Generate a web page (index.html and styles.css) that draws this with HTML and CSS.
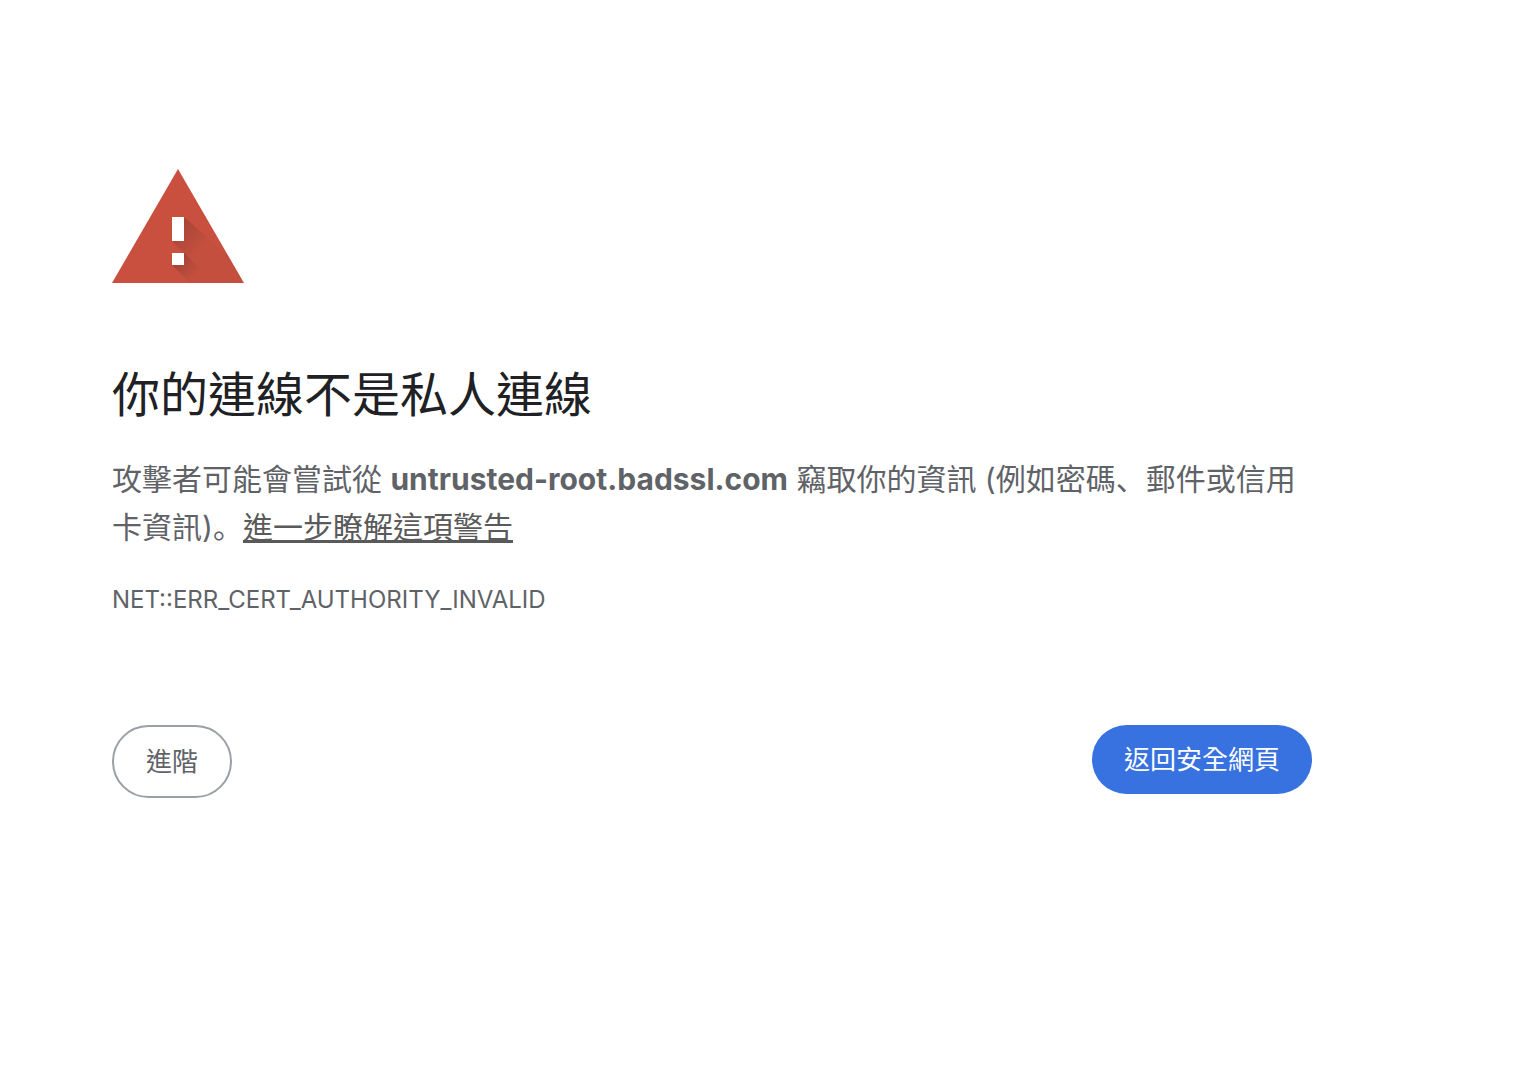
FILE: index.html
```
<!DOCTYPE html>
<html lang="zh-TW">
<head>
    <meta charset="UTF-8">
    <meta name="viewport" content="width=device-width, initial-scale=1.0">
    <title>隱私權錯誤</title>
    <link rel="stylesheet" href="styles.css">
</head>
<body>
    <main class="interstitial">
        <svg class="warning-icon" viewBox="0 0 132 114" aria-hidden="true">
            <defs>
                <linearGradient id="shadow" gradientUnits="userSpaceOnUse" x1="62" y1="62" x2="84" y2="84">
                    <stop offset="0" stop-color="#3e2723" stop-opacity="0.25"/>
                    <stop offset="1" stop-color="#3e2723" stop-opacity="0.03"/>
                </linearGradient>
                <linearGradient id="dot-shadow" gradientUnits="userSpaceOnUse" x1="66" y1="90" x2="83" y2="107">
                    <stop offset="0" stop-color="#3e2723" stop-opacity="0.25"/>
                    <stop offset="1" stop-color="#3e2723" stop-opacity="0"/>
                </linearGradient>
            </defs>
            <path fill="#c9503f" d="M66 0 132 114H0Z"/>
            <path fill="url(#shadow)" d="M72 48 116 86 132 114H78L60 96 72 84 60 72Z"/>
            <path fill="url(#dot-shadow)" d="M72 84 102 114H78L60 96Z"/>
            <path fill="#fff" d="M60 48h12v24H60zM60 84h12v12H60z"/>
        </svg>
        <h1>你的連線不是私人連線</h1>
        <p class="message">攻擊者可能會嘗試從 <strong>untrusted-root.badssl.com</strong> 竊取你的資訊 (例如密碼<span class="punctuation" lang="zh-CN">、</span>郵件或信用卡資訊)<span class="punctuation" lang="zh-CN">。</span><a href="#">進一步瞭解這項警告</a></p>
        <div class="error-code">NET::ERR_CERT_AUTHORITY_INVALID</div>
        <div class="nav-wrapper">
            <button type="button" class="secondary-button">進階</button>
            <button type="button" class="primary-button">返回安全網頁</button>
        </div>
    </main>
</body>
</html>
```
FILE: styles.css
```
body {
    margin: 0;
    background: #fff;
    color: #5f6368;
    font-family: Inter, "Noto Sans CJK TC", sans-serif;
}
.interstitial {
    box-sizing: border-box;
    max-width: 1424px;
    padding: 169px 112px 0;
}
.warning-icon {
    display: block;
    width: 132px;
    height: 114px;
}
h1 {
    margin: 80px 0 28px;
    color: #202124;
    font-size: 48px;
    font-weight: 400;
    line-height: 64px;
}
.message {
    margin: 0;
    font-size: 30px;
    line-height: 48px;
}
.message a {
    color: #5a5a5a;
}
.punctuation {
    font-family: Inter, "Noto Sans CJK SC", sans-serif;
}
.error-code {
    margin-top: 33px;
    font-size: 24px;
    line-height: 32px;
}
.nav-wrapper {
    display: flex;
    justify-content: space-between;
    align-items: flex-start;
    margin-top: 109px;
}
button {
    border-radius: 40px;
    font-family: inherit;
    font-size: 26px;
    cursor: pointer;
}
.secondary-button {
    padding: 16px 32px;
    border: 2px solid #9aa0a6;
    background: #fff;
    color: #5f6368;
    line-height: 37px;
}
.primary-button {
    padding: 16px 32px;
    border: none;
    background: #3871e0;
    color: #fff;
    line-height: 37px;
}
```
